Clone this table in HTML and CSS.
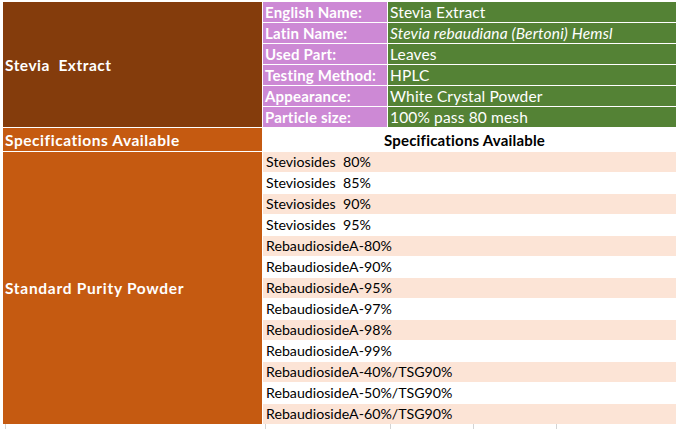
FILE: index.html
```html
<!DOCTYPE html>
<html>
<head>
<meta charset="utf-8">
<link rel="stylesheet" href="styles.css">
</head>
<body>
<div class="sheet">
  <div class="grid">
    <div class="cell title mid">Stevia  Extract</div>
    <div class="cell lbl">English Name:</div><div class="cell val">Stevia Extract</div>
    <div class="cell lbl">Latin Name:</div><div class="cell val"><i>Stevia rebaudiana (Bertoni) Hemsl</i></div>
    <div class="cell lbl">Used Part:</div><div class="cell val">Leaves</div>
    <div class="cell lbl">Testing Method:</div><div class="cell val">HPLC</div>
    <div class="cell lbl">Appearance:</div><div class="cell val">White Crystal Powder</div>
    <div class="cell lbl">Particle size:</div><div class="cell val">100% pass 80 mesh</div>

    <div class="cell spec-left">Specifications Available</div>
    <div class="cell spec-right">Specifications Available</div>

    <div class="cell purity mid">Standard Purity Powder</div>
    <div class="cell item peach">Steviosides  80%</div>
    <div class="cell item">Steviosides  85%</div>
    <div class="cell item peach">Steviosides  90%</div>
    <div class="cell item">Steviosides  95%</div>
    <div class="cell item peach">RebaudiosideA-80%</div>
    <div class="cell item">RebaudiosideA-90%</div>
    <div class="cell item peach">RebaudiosideA-95%</div>
    <div class="cell item">RebaudiosideA-97%</div>
    <div class="cell item peach">RebaudiosideA-98%</div>
    <div class="cell item">RebaudiosideA-99%</div>
    <div class="cell item peach">RebaudiosideA-40%/TSG90%</div>
    <div class="cell item">RebaudiosideA-50%/TSG90%</div>
    <div class="cell item peach">RebaudiosideA-60%/TSG90%</div>
  </div>
  <div class="ticks">
    <span class="tick t1"></span>
    <span class="tick t2"></span>
    <span class="tick t3"></span>
    <span class="tick t4"></span>
    <span class="tick t5"></span>
  </div>
</div>
</body>
</html>
```

FILE: styles.css
```css
html, body {
  margin: 0;
  padding: 0;
  background: #ffffff;
}

.sheet {
  padding: 2px 0 0 3px;
  font-family: Lato, "Open Sans", sans-serif;
  font-size: 14px;
}

.grid {
  display: grid;
  grid-template-columns: 259px 124px 288px;
  grid-template-rows: repeat(6, 20px) 23px repeat(13, 20px);
  gap: 1px;
  width: 673px;
  background: #ffffff;
}

.cell {
  display: flex;
  align-items: flex-end;
  padding: 0 0 1px 2px;
  line-height: 18px;
  white-space: pre;
  overflow: hidden;
}

.mid {
  align-items: center;
  padding-bottom: 0;
}

.title {
  grid-column: 1;
  grid-row: 1 / 7;
  background: #843C0C;
  color: #ffffff;
  font-weight: 700;
  font-size: 15.5px;
  letter-spacing: 0.5px;
}

.lbl {
  grid-column: 2;
  background: #CD89D5;
  color: #ffffff;
  font-weight: 700;
  font-size: 15px;
  letter-spacing: 0.2px;
}

.val {
  grid-column: 3;
  background: #548235;
  color: #ffffff;
  font-size: 15.5px;
  letter-spacing: 0.15px;
}

.spec-left {
  grid-column: 1;
  grid-row: 7;
  background: #C55A11;
  color: #ffffff;
  font-weight: 700;
  font-size: 15.5px;
  letter-spacing: 0.55px;
  padding-bottom: 2px;
}

.spec-right {
  grid-column: 2 / 4;
  grid-row: 7;
  justify-content: center;
  color: #000000;
  font-weight: 700;
  font-size: 15px;
  letter-spacing: 0.2px;
  padding-left: 0;
  padding-right: 10px;
  padding-bottom: 2px;
}

.purity {
  grid-column: 1;
  grid-row: 8 / 21;
  background: #C55A11;
  color: #ffffff;
  font-weight: 700;
  font-size: 15.5px;
  letter-spacing: 0.7px;
}

.item {
  grid-column: 2 / 4;
  color: #000000;
  font-size: 14.2px;
  padding-left: 3px;
}

.peach {
  background: #FCE4D6;
}

.ticks {
  position: relative;
  height: 5px;
  width: 677px;
}

.tick {
  position: absolute;
  top: 0;
  width: 1px;
  height: 5px;
  background: #d4d4d4;
}

.t1 { left: 2px; }
.t2 { left: 262px; }
.t3 { left: 387px; }
.t4 { left: 470px; }
.t5 { left: 553px; }
```
